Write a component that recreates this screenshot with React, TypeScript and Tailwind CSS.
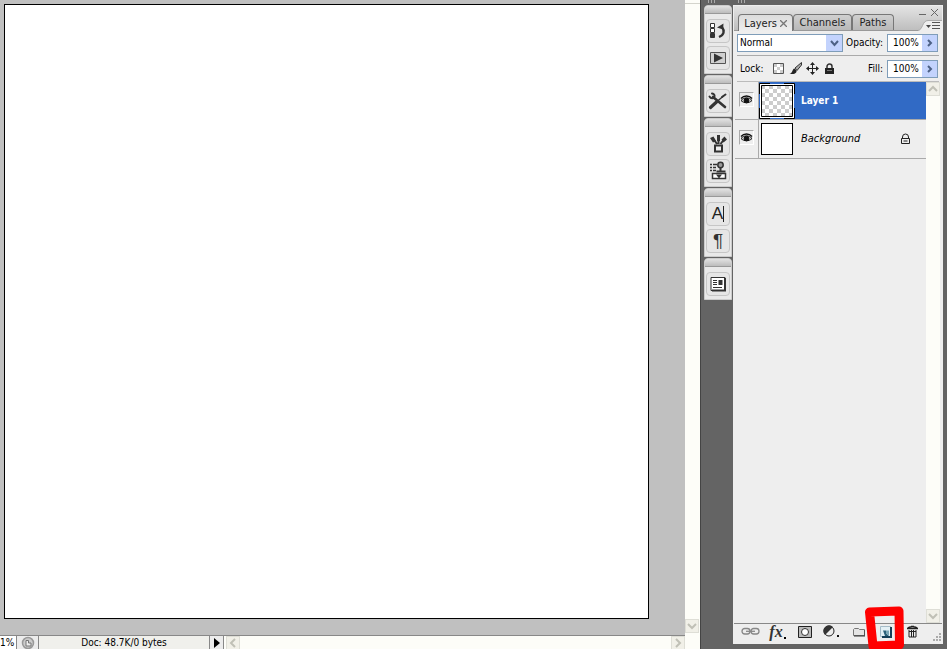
import React from 'react';

interface IconProps {
  className?: string;
}

const HistoryIcon: React.FC<IconProps> = ({ className }) => (
  <svg className={className} width="18" height="18" viewBox="0 0 18 18" fill="none" stroke="#333">
    <path d="M1.5 1.5h4v4h-4zM1.5 6.5h4v4h-4z" fill="#fff" />
    <path d="M1.5 11.5h4v4h-4z" fill="#333" />
    <path d="M10 15c5-2 6-6 3-10" strokeWidth="2.400" />
    <path d="M8 5.500 14.500 1.500 14 7.500z" fill="#333" stroke="none" />
  </svg>
);

const ActionsIcon: React.FC<IconProps> = ({ className }) => (
  <svg className={className} width="18" height="18" viewBox="0 0 18 18">
    <path d="M1.500 3.500h15v11h-15z" fill="#d0d0d0" stroke="#555" />
    <path d="M5 4.500v9l9-4.500z" fill="#333" />
  </svg>
);

const ToolsIcon: React.FC<IconProps> = ({ className }) => (
  <svg className={className} width="20" height="18" viewBox="0 0 20 18" fill="none" stroke="#333" strokeLinecap="round">
    <path d="M5 5 17 15" strokeWidth="2.600" />
    <path d="M1.500 4.500C3 7 6 6.500 6.500 4.500S5 1.500 4 1.500" strokeWidth="2" />
    <path d="M2.500 15.500 8.500 10" strokeWidth="3.200" />
    <path d="M9 9.500 15.500 4" strokeWidth="1.400" />
    <path d="M14 5 17.500 2.500" strokeWidth="2" />
  </svg>
);

const BrushesIcon: React.FC<IconProps> = ({ className }) => (
  <svg className={className} width="20" height="20" viewBox="0 0 20 20" fill="none" stroke="#333">
    <path d="M7 11.500h7v6H7z" fill="#eee" strokeWidth="2" />
    <path d="M9 10 5.500 5M10.500 10V5M12.500 10 16 5.500" strokeWidth="2" />
    <path d="M2 4 5.500 2.500 8 7 5 8.500zM9 1h3v6H9zM13.500 5.500l3-3 2.500 3-3.500 3z" fill="#333" stroke="none" />
  </svg>
);

const CloneIcon: React.FC<IconProps> = ({ className }) => (
  <svg className={className} width="20" height="20" viewBox="0 0 20 20" fill="none" stroke="#333">
    <path d="M2 3.500h2M5 3.500h4M2 6.500h2M5 6.500h3M2 9.500h2M5 9.500h3" strokeWidth="1.500" />
    <circle cx="12.500" cy="4" r="2.700" fill="#999" strokeWidth="1.500" />
    <path d="M12.500 6.500V10M8.500 10.500h9" strokeWidth="2" />
    <path d="M4.500 12.500h13v5h-13z" fill="#fff" strokeWidth="1.500" />
    <path d="M8 13.500h6l-3 4z" fill="#333" stroke="none" />
  </svg>
);

const CharacterIcon: React.FC<IconProps> = ({ className }) => (
  <span className={`${className ?? ''} flex items-center font-['Liberation_Sans',sans-serif] text-[17px] leading-[18px] text-[#222]`}>
    A<i className="h-4 w-px bg-[#222]" />
  </span>
);

const ParagraphIcon: React.FC<IconProps> = ({ className }) => (
  <span className={`${className ?? ''} font-['Liberation_Sans',sans-serif] text-[19px] leading-[18px] text-[#333]`}>¶</span>
);

const CompsIcon: React.FC<IconProps> = ({ className }) => (
  <svg className={className} width="18" height="18" viewBox="0 0 18 18" fill="none" stroke="#333">
    <path d="M2 2.500h14v13H2z" fill="#fff" />
    <path d="M16 3v12.500H3" strokeWidth="2" />
    <path d="M4 5.500h4M4 7.500h4M4 9.500h4M4 12.500h9" />
    <path d="M9.500 5h4v5h-4z" fill="#333" stroke="none" />
  </svg>
);

const dockGroups = [
  [{ label: 'History', Icon: HistoryIcon }, { label: 'Actions', Icon: ActionsIcon }],
  [{ label: 'Tool Presets', Icon: ToolsIcon }],
  [{ label: 'Brushes', Icon: BrushesIcon }, { label: 'Clone Source', Icon: CloneIcon }],
  [{ label: 'Character', Icon: CharacterIcon }, { label: 'Paragraph', Icon: ParagraphIcon }],
  [{ label: 'Layer Comps', Icon: CompsIcon }],
];

const IconDock = () => (
  <aside className="flex w-7 shrink-0 flex-col gap-px">
    {dockGroups.map((group, i) => (
      <div key={i} className="rounded-t-sm border border-[#ccc] bg-[#e9e9e9]">
        <div className="h-2 rounded-t-sm border-b border-[#999] bg-linear-to-b from-[#e2e2e2] to-[#bcbcbc]" />
        <div className="flex flex-col items-center gap-[3px] pt-[5px] pb-[3px]">
          {group.map(({ label, Icon }) => (
            <button
              key={label}
              aria-label={label}
              className="flex h-6 w-6 items-center justify-center rounded-sm border border-[#c6c6c6] bg-[#e6e6e6]"
            >
              <Icon className="shrink-0" />
            </button>
          ))}
        </div>
      </div>
    ))}
  </aside>
);

const ScrollArrow: React.FC<{ label: string; d: string }> = ({ label, d }) => (
  <button aria-label={label} className="flex h-[14px] w-[14px] shrink-0 items-center justify-center border border-[#deded6] bg-[#f1f0e8]">
    <svg width="10" height="10" viewBox="0 0 10 10" fill="none" stroke="#c0c0b6" strokeWidth="2">
      <path d={d} />
    </svg>
  </button>
);

const UP = 'M1 7l4-4 4 4';
const DOWN = 'M1 3l4 4 4-4';
const LEFT = 'M7 1 3 5l4 4';
const RIGHT = 'M3 1l4 4-4 4';

const StatusBar = () => (
  <footer className="flex h-[14px] shrink-0 items-stretch overflow-hidden border-t border-[#888] bg-[#f0f0ec] text-[10px] leading-[14px]">
    <span className="w-[17px] shrink-0 border-r border-[#888] bg-white pr-1 text-right">1%</span>
    <button aria-label="Version Cue" className="flex w-[22px] shrink-0 items-center justify-center border-r border-[#888] bg-[#ececec]">
      <svg width="14" height="14" viewBox="0 0 14 14" fill="none" stroke="#777">
        <circle cx="7" cy="7" r="5.500" fill="#ccc" stroke="#999" strokeWidth="1.500" />
        <path d="M5 4.500h2.500V7H10v3H5z" fill="#eee" />
      </svg>
    </button>
    <span className="w-[171px] shrink-0 border-r border-[#888] text-center">Doc: 48.7K/0 bytes</span>
    <button aria-label="Status options" className="flex w-[14px] shrink-0 items-center justify-center border-r border-[#888] bg-[#ececec]">
      <svg width="6" height="10" viewBox="0 0 6 10"><path d="M0 0v10l6-5z" fill="#000" /></svg>
    </button>
    <div className="flex flex-1 items-center justify-between bg-[#fdfdf8] pl-[2px]">
      <ScrollArrow label="Scroll left" d={LEFT} />
      <ScrollArrow label="Scroll right" d={RIGHT} />
    </div>
  </footer>
);

const DocumentWindow = () => (
  <main className="flex min-w-0 flex-1">
    <div className="flex min-w-0 flex-1 flex-col">
      <div className="flex flex-1 bg-[#c0c0c0] pt-1 pr-9 pb-4 pl-1">
        <div className="flex-1 border border-black bg-white" />
      </div>
      <StatusBar />
    </div>
    <div className="flex w-[15px] shrink-0 flex-col justify-between bg-[#fdfdf8] pb-4">
      <div className="h-1 border-b border-[#d4d4cc]" />
      <ScrollArrow label="Scroll down" d={DOWN} />
    </div>
  </main>
);

const PercentField: React.FC<{ id: string; label: string }> = ({ id, label }) => (
  <div className="flex items-center gap-1">
    <label htmlFor={id}>{label}</label>
    <div className="flex h-[18px] w-[51px] border border-[#7f9db9] bg-white">
      <input id={id} defaultValue="100%" className="w-0 flex-1 pl-[5px] text-[10px] outline-none" />
      <button aria-label={`${label} slider`} className="flex w-[15px] items-center justify-center bg-[#c3d3fd]">
        <svg width="6" height="8" viewBox="0 0 6 8" fill="none" stroke="#4d6185" strokeWidth="2"><path d="M1 1l3 3-3 3" /></svg>
      </button>
    </div>
  </div>
);

const PanelTabs = () => (
  <header className="flex h-[25px] items-end border-b border-[#999] bg-linear-to-b from-[#e4e4e4] to-[#bebebe] pl-1">
    <div role="tablist" className="flex items-end text-[11px] leading-[15px] text-[#222]">
      <button role="tab" aria-selected="true" className="-mb-px flex h-[17px] w-[55px] items-center justify-center gap-[3px] rounded-t border border-b-0 border-[#777] bg-linear-to-b from-[#dcdcdc] to-[#eee]">
        Layers
        <svg width="7" height="7" viewBox="0 0 7 7" stroke="#777" strokeWidth="1.300"><path d="M0 0l7 7M7 0 0 7" /></svg>
      </button>
      <button role="tab" aria-selected="false" className="h-4 w-[59px] rounded-t border border-b-0 border-[#777] bg-linear-to-b from-[#d0d0d0] to-[#b8b8b8]">
        Channels
      </button>
      <button role="tab" aria-selected="false" className="h-4 w-[42px] rounded-t border border-b-0 border-[#777] bg-linear-to-b from-[#d0d0d0] to-[#b8b8b8]">
        Paths
      </button>
    </div>
    <div className="ml-auto flex h-full flex-col items-end justify-between">
      <div className="flex gap-1 pt-[3px] pr-[3px]">
        <button aria-label="Minimize">
          <svg width="8" height="8" viewBox="0 0 8 8" stroke="#666"><path d="M0 5.500h7" /></svg>
        </button>
        <button aria-label="Close">
          <svg width="8" height="8" viewBox="0 0 8 8" stroke="#666"><path d="M0 0l7 7M7 0 0 7" /></svg>
        </button>
      </div>
      <button aria-label="Panel menu" className="-mb-px">
        <svg width="24" height="11" viewBox="0 0 24 11">
          <path d="M0 10.500C5 10 4 .5 10 .5h14V11H0z" fill="#eee" />
          <path d="M0 10.500C5 10 4 .5 10 .5h14" fill="none" stroke="#aaa" />
          <path d="M8 5h5l-2.500 3z" fill="#444" />
          <path d="M14 2.500h8M14 5.500h8M14 8.500h8" stroke="#555" />
        </svg>
      </button>
    </div>
  </header>
);

const BlendRow = () => (
  <div className="mx-[3px] flex h-[25px] items-center justify-between border-b border-[#aaa] pr-px">
    <div className="relative w-[106px]">
      <select aria-label="Blend mode" className="h-[18px] w-full appearance-none border border-[#7f9db9] bg-white pl-[2px] text-[10px] outline-none">
        <option>Normal</option>
      </select>
      <span className="pointer-events-none absolute inset-y-px right-px flex w-4 items-center justify-center bg-[#c3d3fd]">
        <svg width="9" height="7" viewBox="0 0 9 7" fill="none" stroke="#4d6185" strokeWidth="2"><path d="M1 1l3.500 4L8 1" /></svg>
      </span>
    </div>
    <PercentField id="opacity" label="Opacity:" />
  </div>
);

const LockRow = () => (
  <div className="mx-[3px] flex h-[26px] items-center border-b border-[#bbb] pr-px pl-[3px]">
    <span>Lock:</span>
    <div className="ml-[7px] mr-auto flex gap-px">
      <button aria-label="Lock transparent pixels" className="flex h-4 w-4 items-center justify-center">
        <svg width="11" height="11" viewBox="0 0 11 11">
          <path d="M.5 .5h10v10H.5z" fill="#fff" stroke="#555" />
          <path d="M1 1h3v3H1zM7 1h3v3H7zM4 4h3v3H4zM1 7h3v3H1zM7 7h3v3H7z" fill="#ccc" />
        </svg>
      </button>
      <button aria-label="Lock image pixels" className="flex h-4 w-4 items-center justify-center">
        <svg width="13" height="13" viewBox="0 0 13 13">
          <path d="M12.500 .5 6 6l2 2.500L12.500 3z" fill="#aaa" stroke="#333" />
          <path d="M5.500 6.500C3 7 4 11 .5 12c4 .5 7.500-.5 7-3.500z" fill="#222" />
        </svg>
      </button>
      <button aria-label="Lock position" className="flex h-4 w-4 items-center justify-center">
        <svg width="13" height="13" viewBox="0 0 13 13">
          <path d="M6.500 2v9M2 6.500h9" stroke="#222" />
          <path d="M6.500 0 9 3H4zM6.500 13 4 10h5zM0 6.500 3 4v5zM13 6.500 10 9V4z" fill="#222" />
        </svg>
      </button>
      <button aria-label="Lock all" className="flex h-4 w-4 items-center justify-center">
        <svg width="9" height="12" viewBox="0 0 9 12">
          <path d="M2 6V3.500a2.500 2.500 0 0 1 5 0V6" fill="none" stroke="#333" strokeWidth="1.500" />
          <path d="M0 5h9v6H0z" fill="#222" />
          <path d="M2 7.500h5" stroke="#777" />
        </svg>
      </button>
    </div>
    <PercentField id="fill" label="Fill:" />
  </div>
);

const EyeToggle: React.FC<{ name: string }> = ({ name }) => (
  <div className="flex w-6 shrink-0 justify-center border-r border-[#aaa] pt-[10px]">
    <button aria-label={`Toggle ${name}`} className="flex h-[15px] w-[15px] items-center justify-center border border-[#aaa] border-r-white border-b-white">
      <svg width="13" height="10" viewBox="0 0 13 10" fill="none" stroke="#111">
        <path d="M1 3.500C4 0 9 0 12 3.500" strokeWidth="1.500" />
        <path d="M1 5.500C4 2 9 2 12 5.500 9 8.500 4 8.500 1 5.500z" fill="#ccc" />
        <circle cx="6.500" cy="5.500" r="2.300" fill="#111" />
      </svg>
    </button>
  </div>
);

const LayerList = () => (
  <ul className="min-w-0 flex-1">
    <li className="flex h-[38px] border-b border-[#aaa]">
      <EyeToggle name="Layer 1" />
      <div className="flex flex-1 items-center gap-[6px] bg-[#316ac5] font-bold text-white">
        <svg width="36" height="36" viewBox="0 0 36 36">
          <defs>
            <pattern id="checker" x="2" y="2" width="8" height="8" patternUnits="userSpaceOnUse">
              <path d="M0 0h8v8H0z" fill="#fff" />
              <path d="M0 0h4v4H0zM4 4h4v4H4z" fill="#ccc" />
            </pattern>
          </defs>
          <path d="M1 1h34v34H1z" fill="#fff" />
          <path d="M.5 11V.5H11M25 .5h10.500V11M35.500 25v10.500H25M11 35.500H.5V25" fill="none" stroke="#000" />
          <path d="M2.500 2.500h31v31h-31z" fill="url(#checker)" stroke="#000" />
        </svg>
        <span className="text-[10px]">Layer 1</span>
      </div>
    </li>
    <li className="flex h-[39px] border-b border-[#aaa]">
      <EyeToggle name="Background" />
      <div className="flex flex-1 items-center gap-2 pr-4 pl-[2px]">
        <div className="h-8 w-8 border border-black bg-white" />
        <span className="text-[11px] italic">Background</span>
        <svg className="ml-auto" width="9" height="12" viewBox="0 0 9 12" fill="none" stroke="#222">
          <path d="M1.500 5.500V4a3 3 0 0 1 6 0v1.500" />
          <path d="M.5 5.500h8v5h-8zM2.500 8h4" />
        </svg>
      </div>
    </li>
  </ul>
);

const footerButtons = [
  {
    label: 'Link layers',
    icon: (
      <svg width="19" height="9" viewBox="0 0 19 9" fill="none" stroke="#888" strokeWidth="1.300">
        <rect x="1" y="1.500" width="8" height="5.500" rx="2.700" />
        <rect x="10" y="1.500" width="8" height="5.500" rx="2.700" />
        <path d="M5 4.300h9" />
      </svg>
    ),
  },
  {
    label: 'Layer style',
    icon: (
      <span className="flex items-end font-['Liberation_Serif',serif] text-[16px] leading-4 font-bold text-[#333] italic">
        fx<i className="mb-px ml-px h-[2px] w-[2px] bg-black" />
      </span>
    ),
  },
  {
    label: 'Add mask',
    icon: (
      <svg width="14" height="12" viewBox="0 0 14 12">
        <path d="M.5 .5h13v11H.5z" fill="#bbb" stroke="#222" />
        <circle cx="7" cy="6" r="3.500" fill="#fff" stroke="#333" />
      </svg>
    ),
  },
  {
    label: 'Adjustment layer',
    icon: (
      <svg width="17" height="13" viewBox="0 0 17 13">
        <circle cx="6" cy="6" r="5" fill="#eee" stroke="#222" />
        <path d="M2 10A5.500 5.500 0 0 1 10 2z" fill="#333" />
        <path d="M14 10h2v2h-2z" fill="#111" />
      </svg>
    ),
  },
  {
    label: 'New group',
    icon: (
      <svg width="12" height="10" viewBox="0 0 12 10">
        <path d="M.5 8.500v-6l1-1h4l1 1h5v6z" fill="#e4e4e4" stroke="#777" />
        <path d="M1 9h11V3" fill="none" stroke="#333" />
      </svg>
    ),
  },
  {
    label: 'New layer',
    icon: (
      <svg width="12" height="12" viewBox="0 0 12 12">
        <path d="M.5 .5h10v10H.5z" fill="#e3f0f5" stroke="#a5bcc8" />
        <path d="M11 1v10H2" fill="none" stroke="#153f58" strokeWidth="2" />
        <path d="M3 4.500h3V7l3 3H5z" fill="#2c6179" />
        <path d="M6 4.500h3V10L6 7z" fill="#78a5b5" />
      </svg>
    ),
  },
  {
    label: 'Delete layer',
    icon: (
      <svg width="11" height="13" viewBox="0 0 11 13" fill="none" stroke="#222">
        <path d="M.5 3.500C2 1 9 1 10.500 3.500zM4 1.500h3" strokeWidth="1.300" />
        <path d="M2 5v7h7V5M4.500 5v7M6.500 5v7M2 6.500h7" />
      </svg>
    ),
  },
];

const LayersPanel = () => (
  <section className="flex w-[210px] shrink-0 flex-col border border-[#eee] bg-[#eee] text-[10px] leading-[14px]">
    <PanelTabs />
    <BlendRow />
    <LockRow />
    <div className="mr-[2px] ml-px flex flex-1">
      <LayerList />
      <div className="flex w-[14px] flex-col justify-between bg-[#fdfdf8]">
        <ScrollArrow label="Scroll layers up" d={UP} />
        <ScrollArrow label="Scroll layers down" d={DOWN} />
      </div>
    </div>
    <footer className="flex h-5 items-center border-t border-[#888] pl-[3px]">
      {footerButtons.map(({ label, icon }) => (
        <button key={label} aria-label={label} className="relative mb-1 flex h-4 w-[27px] items-center justify-center">
          {icon}
          {label === 'New layer' && (
            <svg className="pointer-events-none absolute -top-5 -left-[9px] z-10" width="44" height="48" viewBox="0 0 44 48">
              <path d="M6.500 8 36 7l.5 34-26.500 1z" fill="none" stroke="#f00" strokeWidth="9" strokeLinejoin="round" />
            </svg>
          )}
        </button>
      ))}
      <svg className="mt-auto ml-auto" width="10" height="10" viewBox="0 0 10 10" fill="#aaa">
        <path d="M7 0h2v2H7zM4 3h2v2H4zM7 3h2v2H7zM1 6h2v2H1zM4 6h2v2H4zM7 6h2v2H7z" />
      </svg>
    </footer>
  </section>
);

const Grip = () => (
  <svg width="7" height="3" viewBox="0 0 7 3" stroke="#aaa"><path d="M.5 0v3M3.500 0v3M6.500 0v3" /></svg>
);

const App = () => (
  <div className="flex h-screen overflow-hidden bg-[#646464] font-['DejaVu_Sans_Condensed','DejaVu_Sans',sans-serif] text-black">
    <DocumentWindow />
    <div className="flex shrink-0 flex-col border-l border-[#444] pr-1 pb-[5px] pl-[3px]">
      <div className="flex h-[5px] items-start gap-[23px] pl-1">
        <Grip />
        <Grip />
      </div>
      <div className="flex flex-1 gap-px">
        <IconDock />
        <LayersPanel />
      </div>
    </div>
  </div>
);

export default App;
